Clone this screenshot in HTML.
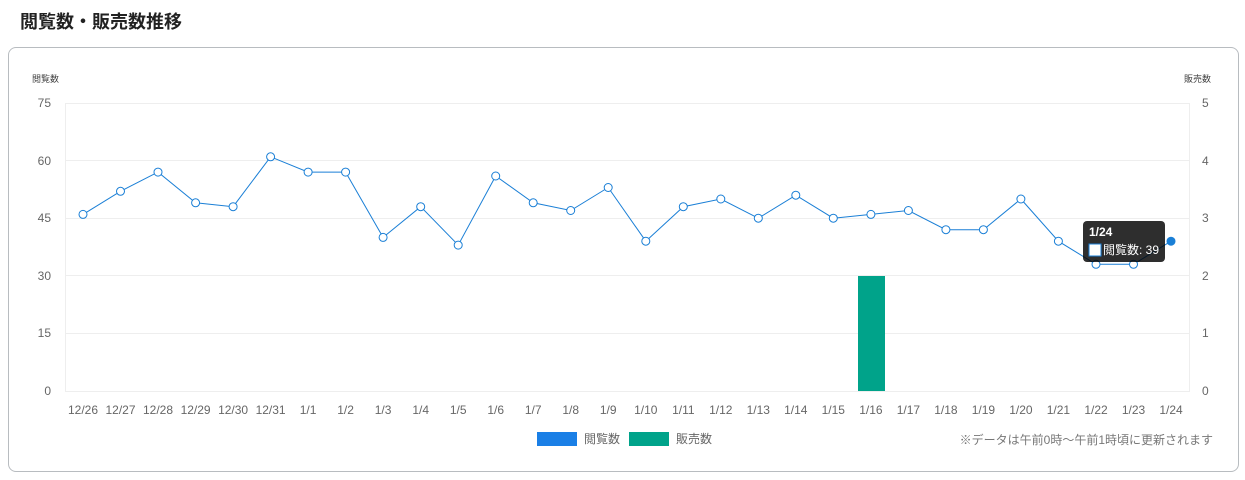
<!DOCTYPE html>
<html><head><meta charset="utf-8"><style>
body{margin:0;width:1245px;height:480px;background:#fff;font-family:"Liberation Sans","Noto Sans CJK JP",sans-serif;position:relative;overflow:hidden}
h1{position:absolute;left:20px;top:8px;margin:0;font-size:18px;font-weight:bold;color:#222}
.card{position:absolute;left:8px;top:47px;width:1229px;height:423px;border:1px solid #b8bcc0;border-radius:8px}
svg{position:absolute;left:0;top:0}
text{font-family:"Liberation Sans","Noto Sans CJK JP",sans-serif}
</style></head><body>
<h1>閲覧数・販売数推移</h1>
<div class="card"></div>
<svg width="1245" height="480" viewBox="0 0 1245 480">
<g stroke="#eeeeee" stroke-width="1">
<line x1="65" y1="103.5" x2="1190" y2="103.5"/><line x1="65" y1="160.5" x2="1190" y2="160.5"/><line x1="65" y1="218.5" x2="1190" y2="218.5"/><line x1="65" y1="275.5" x2="1190" y2="275.5"/><line x1="65" y1="333.5" x2="1190" y2="333.5"/><line x1="65" y1="391.5" x2="1190" y2="391.5"/>
<line x1="65.5" y1="103" x2="65.5" y2="391"/><line x1="1189.5" y1="103" x2="1189.5" y2="391"/>
</g>
<g font-size="12" fill="#666" text-anchor="end">
<text x="51" y="107">75</text><text x="51" y="165">60</text><text x="51" y="222">45</text><text x="51" y="280">30</text><text x="51" y="337">15</text><text x="51" y="395">0</text>
</g>
<g font-size="12" fill="#666" text-anchor="start">
<text x="1202" y="107">5</text><text x="1202" y="165">4</text><text x="1202" y="222">3</text><text x="1202" y="280">2</text><text x="1202" y="337">1</text><text x="1202" y="395">0</text>
</g>
<text x="32" y="82" font-size="9" fill="#444">閲覧数</text>
<text x="1184" y="82" font-size="9" fill="#444">販売数</text>
<rect x="858" y="276" width="27" height="115" fill="#00a38a"/>
<polyline fill="none" stroke="#1a7fd6" stroke-width="1" points="83,214.4 120.5,191.3 158,172.1 195.6,202.8 233.1,206.7 270.6,156.8 308.1,172.1 345.6,172.1 383.1,237.4 420.7,206.7 458.2,245.1 495.7,176 533.2,202.8 570.7,210.5 608.2,187.5 645.8,241.2 683.3,206.7 720.8,199 758.3,218.2 795.8,195.2 833.3,218.2 870.9,214.4 908.4,210.5 945.9,229.7 983.4,229.7 1020.9,199 1058.4,241.2 1096,264.3 1133.5,264.3 1171,241.2"/>
<g fill="#fff" stroke="#1a7fd6" stroke-width="1">
<circle cx="83" cy="214.4" r="4"/><circle cx="120.5" cy="191.3" r="4"/><circle cx="158" cy="172.1" r="4"/><circle cx="195.6" cy="202.8" r="4"/><circle cx="233.1" cy="206.7" r="4"/><circle cx="270.6" cy="156.8" r="4"/><circle cx="308.1" cy="172.1" r="4"/><circle cx="345.6" cy="172.1" r="4"/><circle cx="383.1" cy="237.4" r="4"/><circle cx="420.7" cy="206.7" r="4"/><circle cx="458.2" cy="245.1" r="4"/><circle cx="495.7" cy="176" r="4"/><circle cx="533.2" cy="202.8" r="4"/><circle cx="570.7" cy="210.5" r="4"/><circle cx="608.2" cy="187.5" r="4"/><circle cx="645.8" cy="241.2" r="4"/><circle cx="683.3" cy="206.7" r="4"/><circle cx="720.8" cy="199" r="4"/><circle cx="758.3" cy="218.2" r="4"/><circle cx="795.8" cy="195.2" r="4"/><circle cx="833.3" cy="218.2" r="4"/><circle cx="870.9" cy="214.4" r="4"/><circle cx="908.4" cy="210.5" r="4"/><circle cx="945.9" cy="229.7" r="4"/><circle cx="983.4" cy="229.7" r="4"/><circle cx="1020.9" cy="199" r="4"/><circle cx="1058.4" cy="241.2" r="4"/><circle cx="1096" cy="264.3" r="4"/><circle cx="1133.5" cy="264.3" r="4"/>
</g>
<circle cx="1171" cy="241.2" r="4.5" fill="#1a7fd6"/>
<g font-size="12" fill="#666" text-anchor="middle">
<text x="83" y="414">12/26</text><text x="120.5" y="414">12/27</text><text x="158" y="414">12/28</text><text x="195.6" y="414">12/29</text><text x="233.1" y="414">12/30</text><text x="270.6" y="414">12/31</text><text x="308.1" y="414">1/1</text><text x="345.6" y="414">1/2</text><text x="383.1" y="414">1/3</text><text x="420.7" y="414">1/4</text><text x="458.2" y="414">1/5</text><text x="495.7" y="414">1/6</text><text x="533.2" y="414">1/7</text><text x="570.7" y="414">1/8</text><text x="608.2" y="414">1/9</text><text x="645.8" y="414">1/10</text><text x="683.3" y="414">1/11</text><text x="720.8" y="414">1/12</text><text x="758.3" y="414">1/13</text><text x="795.8" y="414">1/14</text><text x="833.3" y="414">1/15</text><text x="870.9" y="414">1/16</text><text x="908.4" y="414">1/17</text><text x="945.9" y="414">1/18</text><text x="983.4" y="414">1/19</text><text x="1020.9" y="414">1/20</text><text x="1058.4" y="414">1/21</text><text x="1096" y="414">1/22</text><text x="1133.5" y="414">1/23</text><text x="1171" y="414">1/24</text>
</g>
<rect x="1083" y="221" width="82" height="41" rx="4" fill="rgba(0,0,0,0.82)"/>
<text x="1089" y="236" font-size="12" font-weight="bold" fill="#fff">1/24</text>
<rect x="1089" y="244" width="12" height="12" fill="#fff" stroke="#1a7fd6" stroke-width="1"/>
<text x="1103" y="254" font-size="12" fill="#fff">閲覧数: 39</text>
<rect x="537" y="432" width="40" height="14" fill="#1a7fe6"/>
<text x="584" y="443" font-size="12" fill="#666">閲覧数</text>
<rect x="629" y="432" width="40" height="14" fill="#00a38a"/>
<text x="676" y="443" font-size="12" fill="#666">販売数</text>
<text x="1213" y="444" font-size="12" fill="#777" text-anchor="end">※データは午前0時～午前1時頃に更新されます</text>
</svg>
</body></html>
